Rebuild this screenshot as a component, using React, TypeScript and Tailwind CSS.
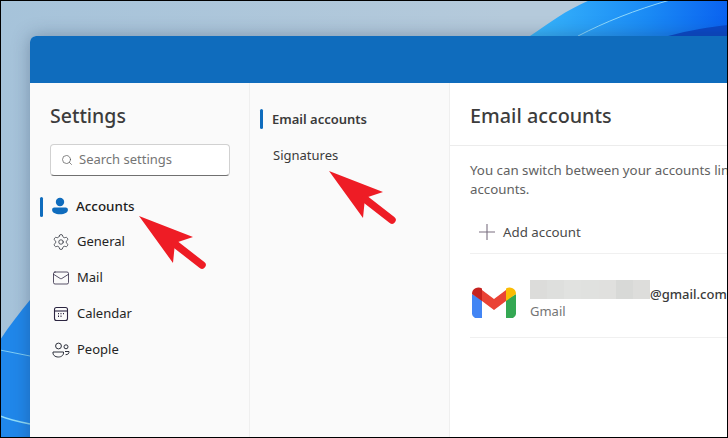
import React from 'react';
import { Search, Settings as Gear, Mail } from 'lucide-react';

const CalendarIcon = () => (
  <svg width="18" height="18" viewBox="0 0 18 18" fill="none" stroke="#2b2440" strokeWidth="1.1">
    <rect x="2.5" y="2.5" width="13" height="13" rx="2" />
    <path d="M2.5 6h13" />
    <path d="M6 8.6h1M8.5 8.6h1M11 8.6h1M6 11.2h1M8.5 11.2h1" strokeWidth="1.4" />
  </svg>
);

const PeopleIcon = () => (
  <svg width="18" height="18" viewBox="0 0 18 18" fill="none" stroke="#2b2f3a" strokeWidth="1">
    <circle cx="6.5" cy="5" r="2.9" />
    <circle cx="14" cy="5.800" r="2" />
    <path d="M1 11h10.500c.4 3-1.800 5-5.200 5S.6 14 1 11z" />
    <path d="M13 10.500h4c.3 1.900-1.100 3.200-3.400 3.200" />
  </svg>
);

const AccountIcon = () => (
  <svg width="16" height="18" viewBox="0 0 16 18" fill="#0f6cbd">
    <circle cx="8" cy="5" r="4.200" />
    <path d="M2.300 10.500h11.400a2.200 2.200 0 0 1 2.200 2.300c0 2.800-3.200 4.500-7.900 4.500S.1 15.600.1 12.800a2.200 2.200 0 0 1 2.200-2.300z" />
  </svg>
);

const PlusIcon = () => (
  <svg width="16" height="16" viewBox="0 0 16 16" stroke="#7a6f80" strokeWidth="1.1">
    <path d="M8 0v16M0 8h16" />
  </svg>
);

const GmailIcon = () => (
  <svg className="mt-[2px] shrink-0" width="44" height="32" viewBox="0 0 44 32">
    <path d="M0 8v20a5 5 0 0 0 3 4h7V14z" fill="#4285f4" />
    <path d="M44 8v20a5 5 0 0 1-3 4h-7V14z" fill="#34a853" />
    <path d="M10 4 22 13 34 4v11L22 24 10 15z" fill="#ea4335" />
    <path d="M0 8a6.500 6.500 0 0 1 10-5.500V15L0 8z" fill="#c5221f" />
    <path d="M44 8a6.500 6.500 0 0 0-10-5.500V15l10-7z" fill="#fbbc04" />
  </svg>
);

const Arrow = ({ className }: { className: string }) => (
  <svg className={className} width="70" height="56" viewBox="0 0 70 56">
    <path d="M0 0 54 21 36 27 34 47 Z" fill="#ee1c25" />
    <path d="M36 28 63 49" stroke="#ee1c25" strokeWidth="7.500" strokeLinecap="round" />
  </svg>
);

const navItems = [
  { label: 'General', icon: <Gear size={20} strokeWidth={1.05} color="#2b2f3a" /> },
  { label: 'Mail', icon: <Mail size={20} strokeWidth={1.05} color="#2b2440" /> },
  { label: 'Calendar', icon: <CalendarIcon /> },
  { label: 'People', icon: <PeopleIcon /> },
];

// mosaic tones of the blurred address
const blurTones = ['#dcdcda', '#dedfdd', '#e1e2e0', '#e0e1df', '#e0e0de', '#d8d9d7', '#dddddb'];

const Wallpaper = () => (
  <svg className="absolute inset-0" width="728" height="438" viewBox="0 0 728 438">
    <defs>
      <linearGradient id="sky" x1="0" y1="0" x2="1" y2="0">
        <stop offset="0" stopColor="#a6c3da" />
        <stop offset="0.7" stopColor="#b5cadb" />
      </linearGradient>
      <linearGradient id="wave" x1="0" y1="0" x2="1" y2="0">
        <stop offset="0" stopColor="#38b6fb" />
        <stop offset="0.6" stopColor="#1a8af5" />
        <stop offset="1" stopColor="#0a62f0" />
      </linearGradient>
    </defs>
    <rect width="728" height="438" fill="url(#sky)" />
    <path d="M530 36 C548 24 566 10 590 0 L728 0 L728 36 Z" fill="url(#wave)" />
    <path d="M578 36 C605 22 635 10 670 0" stroke="#8fd8fb" strokeWidth="1" fill="none" />
    <path d="M668 36 C690 30 710 27 728 25 L728 36 Z" fill="#0a48c8" />
    <path d="M0 340 C10 325 20 312 30 300 L30 438 L0 438 Z" fill="#2087ea" />
    <path d="M0 350 C10 352 20 354 30 356" stroke="#7fcdf5" strokeWidth="1" fill="none" />
    <path d="M0 416 C10 420 20 422 30 424" stroke="#8fdcf8" strokeWidth="1.500" fill="none" />
  </svg>
);

export default function App() {
  return (
    <div className="relative w-[728px] h-[438px] overflow-hidden font-['Noto_Sans',sans-serif]">
      <Wallpaper />

      {/* Settings window */}
      <div className="relative h-full pt-[36px] pl-[30px]">
        <div className="flex flex-col w-[760px] h-[480px] rounded-t-[6px] overflow-hidden bg-white shadow-[0_0_18px_rgba(30,50,80,0.35)]">
          <div className="h-[47px] shrink-0 bg-[#0f6cbd]" />

          <div className="flex flex-1">
            {/* Left nav */}
            <div className="w-[220px] shrink-0 bg-[#fafafa] border-r border-[#efefef] pt-[21px]">
              <h1 className="pl-[20px] text-[19.5px] leading-[24px] font-medium text-[#3c3c3c]">Settings</h1>
              <div className="ml-[20px] mt-[16px] w-[180px] h-[32px] flex items-center gap-[6px] pl-[10px] bg-white border border-[#d1d1d1] border-b-[#707070] rounded-[4px]">
                <Search size={12} strokeWidth={1.4} color="#555" />
                <span className="text-[13px] text-[#757575]">Search settings</span>
              </div>
              <div className="flex flex-col mt-[12px]">
                <div className="relative h-[36px] flex items-center pl-[22px] gap-[8px]">
                  <div className="absolute left-[10px] top-[9px] w-[3px] h-[20px] rounded-full bg-[#0f6cbd]" />
                  <AccountIcon />
                  <span className="text-[13.4px] font-medium text-[#1c1c1c]">Accounts</span>
                </div>
                {navItems.map((item) => (
                  <div key={item.label} className="h-[36px] flex items-center pl-[22px] gap-[7px]">
                    <span className="w-[18px] h-[18px] flex items-center justify-center shrink-0">{item.icon}</span>
                    <span className="text-[13px] text-[#242424]">{item.label}</span>
                  </div>
                ))}
              </div>
            </div>

            {/* Middle column */}
            <div className="w-[200px] shrink-0 bg-[#fafafa] border-r border-[#efefef] pt-[19px]">
              <div className="relative h-[36px] flex items-center pl-[22px]">
                <div className="absolute left-[10px] top-[7px] w-[3px] h-[20px] rounded-full bg-[#0f6cbd]" />
                <span className="text-[13px] font-semibold text-[#3a3a3a]">Email accounts</span>
              </div>
              <div className="h-[36px] flex items-center pl-[23px]">
                <span className="text-[13px] text-[#3a3a3a]">Signatures</span>
              </div>
            </div>

            {/* Right pane */}
            <div className="flex-1 bg-white">
              <div className="h-[63px] flex items-center pl-[20px] pt-[3px] border-b border-[#ececec]">
                <h2 className="text-[19.8px] font-medium text-[#3c3c3c]">Email accounts</h2>
              </div>
              <p className="pl-[20px] pt-[15px] w-[400px] text-[13.3px] leading-[19px] text-[#616161]">
                You can switch between your accounts linked to your<br />accounts.
              </p>
              <div className="ml-[20px] mt-[12px] h-[43px] flex items-center gap-[8px] pl-[9px] border-b border-[#f0f0f0]">
                <PlusIcon />
                <span className="text-[13.3px] text-[#4a4a4a] mt-[1px]">Add account</span>
              </div>
              <div className="ml-[20px] h-[84px] pt-[10px] flex items-center gap-[14px] pl-[2px] border-b border-[#f0f0f0]">
                <GmailIcon />
                <div className="flex flex-col">
                  <div className="flex items-start">
                    <div className="flex w-[120px] h-[19px]">
                      {blurTones.map((tone) => (
                        <div key={tone} className="flex-1 h-full" style={{ backgroundColor: tone }} />
                      ))}
                    </div>
                    <span className="mt-[5px] text-[13px] leading-[19px] font-medium text-[#3a3a3a] whitespace-nowrap">@gmail.com</span>
                  </div>
                  <span className="text-[13px] leading-[20px] text-[#757575] mt-[-3px]">Gmail</span>
                </div>
              </div>
            </div>
          </div>
        </div>
      </div>

      {/* Annotation arrows */}
      <Arrow className="absolute left-[139px] top-[216px]" />
      <Arrow className="absolute left-[329px] top-[171px]" />

      {/* Screenshot frame */}
      <div className="absolute inset-0 border border-black pointer-events-none" />
    </div>
  );
}
